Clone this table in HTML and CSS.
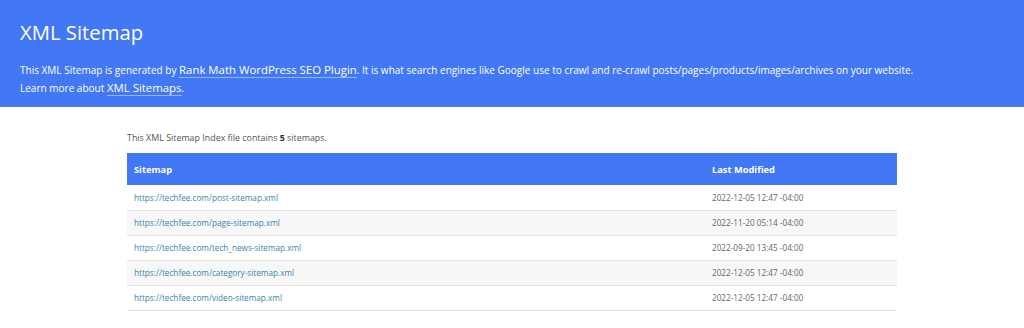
FILE: index.html
```html
<html>

<head>
    <meta http-equiv="Content-Type" content="text/html; charset=UTF-8">
    <link rel="stylesheet" href="styles.css">
</head>

<body>
    <div class="header">
        <h1>XML Sitemap</h1>
        <p class="description">
            This XML Sitemap is generated by <a href="#">Rank Math WordPress SEO Plugin</a>. It is what search engines like Google use to crawl and re-crawl posts/pages/products/images/archives on your website.<br>
            Learn more about <a href="#">XML Sitemaps</a>.
        </p>
    </div>

    <div class="content">
        <p class="intro">This XML Sitemap Index file contains <strong>5</strong> sitemaps.</p>
        <table class="sitemap-table">
            <thead>
                <tr>
                    <th class="col-loc">Sitemap</th>
                    <th class="col-date">Last Modified</th>
                </tr>
            </thead>
            <tbody>
                <tr>
                    <td><a href="#">https://techfee.com/post-sitemap.xml</a></td>
                    <td>2022-12-05 12:47 -04:00</td>
                </tr>
                <tr>
                    <td><a href="#">https://techfee.com/page-sitemap.xml</a></td>
                    <td>2022-11-20 05:14 -04:00</td>
                </tr>
                <tr>
                    <td><a href="#">https://techfee.com/tech_news-sitemap.xml</a></td>
                    <td>2022-09-20 13:45 -04:00</td>
                </tr>
                <tr>
                    <td><a href="#">https://techfee.com/category-sitemap.xml</a></td>
                    <td>2022-12-05 12:47 -04:00</td>
                </tr>
                <tr>
                    <td><a href="#">https://techfee.com/video-sitemap.xml</a></td>
                    <td>2022-12-05 12:47 -04:00</td>
                </tr>
            </tbody>
        </table>
    </div>
</body>

</html>
```

FILE: styles.css
```css
body {
    margin: 0;
    font-family: "Open Sans", "Noto Sans", sans-serif;
    color: #444444;
    background: #ffffff;
}

.header {
    background: #4278f4;
    color: #ffffff;
    padding: 18px 20px 10px;
    height: 79px;
}

h1 {
    font-weight: normal;
    font-size: 20.3px;
    line-height: 28px;
    margin: 0 0 15px;
}

.description {
    margin: 0;
    font-size: 10.03px;
    line-height: 17px;
}

.description a {
    color: #ffffff;
    font-size: 11.4px;
    text-decoration: none;
    border-bottom: 1px solid rgba(255, 255, 255, 0.45);
}

.content {
    width: 770px;
    margin: 0 auto;
}

.intro {
    font-size: 8.9px;
    margin: 24px 0 8px;
    line-height: 14px;
    color: #555555;
}

strong {
    color: #333333;
}

.sitemap-table {
    width: 100%;
    border-collapse: collapse;
}

.sitemap-table th {
    background: #4278f4;
    color: #ffffff;
    text-align: left;
    font-size: 9.3px;
    height: 32px;
    padding: 0 7px;
}

.sitemap-table .col-date {
    width: 178px;
}

.sitemap-table td {
    font-size: 8.2px;
    height: 25px;
    padding: 0 7px;
    border-bottom: 1px solid #e2e2e2;
    color: #666666;
}

.sitemap-table tbody tr:nth-child(even) {
    background: #f7f7f7;
}

.sitemap-table a {
    color: #3a86a8;
    text-decoration: none;
}
```
